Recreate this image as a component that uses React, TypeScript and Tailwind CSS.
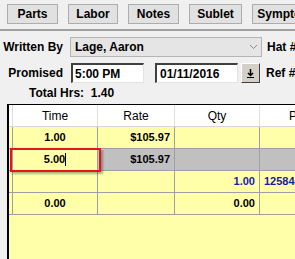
import React from "react";

const tabs = [
  { label: "Parts", w: "w-[51px]" },
  { label: "Labor", w: "w-[50px]" },
  { label: "Notes", w: "w-[51px]" },
  { label: "Sublet", w: "w-[53px]" },
  { label: "Symptoms", w: "w-[72px]" },
];

function Cell({
  className = "",
  children,
}: {
  className?: string;
  children?: React.ReactNode;
}) {
  return (
    <div className={`h-full shrink-0 flex items-center border-r border-[#a0a0a0] ${className}`}>
      {children}
    </div>
  );
}

export default function App() {
  return (
    <div
      className="w-[295px] h-[259px] overflow-hidden bg-[#f0f0f0] text-[12px] font-bold text-black"
      style={{ fontFamily: '"Liberation Sans", Arial, sans-serif' }}
    >
      {/* tab buttons */}
      <div className="flex gap-[10px] pl-[7px] pt-[4px] whitespace-nowrap">
        {tabs.map((t) => (
          <div
            key={t.label}
            className={`${t.w} shrink-0 h-[20px] flex items-center justify-center border border-[#adadad] bg-[#e1e1e1]`}
          >
            {t.label}
          </div>
        ))}
      </div>
      <div className="mt-[5px] h-[2px] bg-[#a0a0a0]" />

      {/* written by */}
      <div className="flex items-center mt-[6px] h-[20px] whitespace-nowrap">
        <div className="w-[64px] shrink-0 text-right pr-[1px]">Written By</div>
        <div className="ml-[6px] w-[192px] shrink-0 h-[20px] flex items-center justify-between border border-[#b5b5b5] bg-[#e5e5e5] pl-[4px] pr-[3px]">
          <span>Lage, Aaron</span>
          <svg width="9" height="6" viewBox="0 0 9 6" className="text-[#8a8a8a]">
            <path d="M1 1l3.5 3.5L8 1" fill="none" stroke="currentColor" strokeWidth="1" />
          </svg>
        </div>
        <div className="ml-[5px] shrink-0">Hat #</div>
      </div>

      {/* promised */}
      <div className="flex items-center mt-[6px] h-[20px] whitespace-nowrap">
        <div className="w-[63px] shrink-0 text-right">Promised</div>
        <div className="ml-[8px] w-[73px] shrink-0 h-[20px] flex items-center bg-white border-t-2 border-l-2 border-t-[#404040] border-l-[#404040] border-b border-r border-b-[#e3e3e3] border-r-[#e3e3e3] pl-[2px]">
          5:00 PM
        </div>
        <div className="ml-[11px] w-[83px] shrink-0 h-[20px] flex items-center bg-white border-t-2 border-l-2 border-t-[#404040] border-l-[#404040] border-b border-r border-b-[#e3e3e3] border-r-[#e3e3e3] pl-[3px]">
          01/11/2016
        </div>
        <div className="ml-[3px] w-[19px] shrink-0 h-[20px] flex items-center justify-center bg-[#d4d0c8] border border-t-white border-l-white border-b-[#404040] border-r-[#404040]">
          <svg width="9" height="11" viewBox="0 0 9 11">
            <path d="M4.5 1v6M2 5l2.5 2.5L7 5" fill="none" stroke="#000" strokeWidth="1.5" />
            <path d="M1 9.5h7" stroke="#000" strokeWidth="1" />
          </svg>
        </div>
        <div className="ml-[6px] shrink-0">Ref #</div>
      </div>

      {/* total hours */}
      <div className="pl-[29px] mt-[3px] h-[14px] leading-[14px] whitespace-nowrap">
        Total Hrs:&nbsp; 1.40
      </div>

      {/* labor grid */}
      <div className="mt-[4px] ml-[7px] w-[330px] h-[160px] border-l-2 border-t border-black bg-[#ffffaa] text-[11px]">
        <div className="flex h-[22px] bg-white font-normal text-[12px] border-b border-[#d8d8d8]">
          <div className="w-[4px] shrink-0 h-full border-r border-[#e0e0e0]" />
          <div className="w-[85px] shrink-0 h-full flex items-center justify-center border-r border-[#e0e0e0]">Time</div>
          <div className="w-[77px] shrink-0 h-full flex items-center justify-center border-r border-[#e0e0e0]">Rate</div>
          <div className="w-[85px] shrink-0 h-full flex items-center justify-center border-r border-[#e0e0e0]">Qty</div>
          <div className="w-[70px] shrink-0 h-full flex items-center pl-[29px]">Part #</div>
        </div>

        <div className="flex h-[22px] border-b border-[#a0a0a0]">
          <Cell className="w-[4px]" />
          <Cell className="w-[85px] justify-center">1.00</Cell>
          <Cell className="w-[77px] justify-end pr-[4px]">$105.97</Cell>
          <Cell className="w-[85px]" />
          <div className="w-[70px] shrink-0" />
        </div>

        <div className="flex h-[22px] border-b border-[#a0a0a0] bg-[#c0c0c0] relative">
          <Cell className="w-[4px] bg-[#ffffaa]" />
          <Cell className="w-[85px] justify-center bg-[#ffffaa]">
            5.00<span className="inline-block w-[1px] h-[13px] bg-black" />
          </Cell>
          <Cell className="w-[77px] justify-end pr-[4px]">$105.97</Cell>
          <Cell className="w-[85px]" />
          <div className="w-[70px] shrink-0" />
          <div className="absolute left-[1px] top-[-1px] w-[91px] h-[24px] border-2 border-[#e8141b] shadow-[2px_2px_2px_rgba(0,0,0,0.3)]" />
        </div>

        <div className="flex h-[22px] border-b border-[#a0a0a0] text-[#1a1aa6]">
          <Cell className="w-[4px]" />
          <Cell className="w-[85px]" />
          <Cell className="w-[77px]" />
          <Cell className="w-[85px] justify-end pr-[4px]">1.00</Cell>
          <div className="w-[70px] shrink-0 h-full flex items-center pl-[4px]">125840</div>
        </div>

        <div className="flex h-[22px] border-b border-[#a0a0a0]">
          <Cell className="w-[4px]" />
          <Cell className="w-[85px] justify-center">0.00</Cell>
          <Cell className="w-[77px]" />
          <Cell className="w-[85px] justify-end pr-[4px]">0.00</Cell>
          <div className="w-[70px] shrink-0" />
        </div>
      </div>
    </div>
  );
}
